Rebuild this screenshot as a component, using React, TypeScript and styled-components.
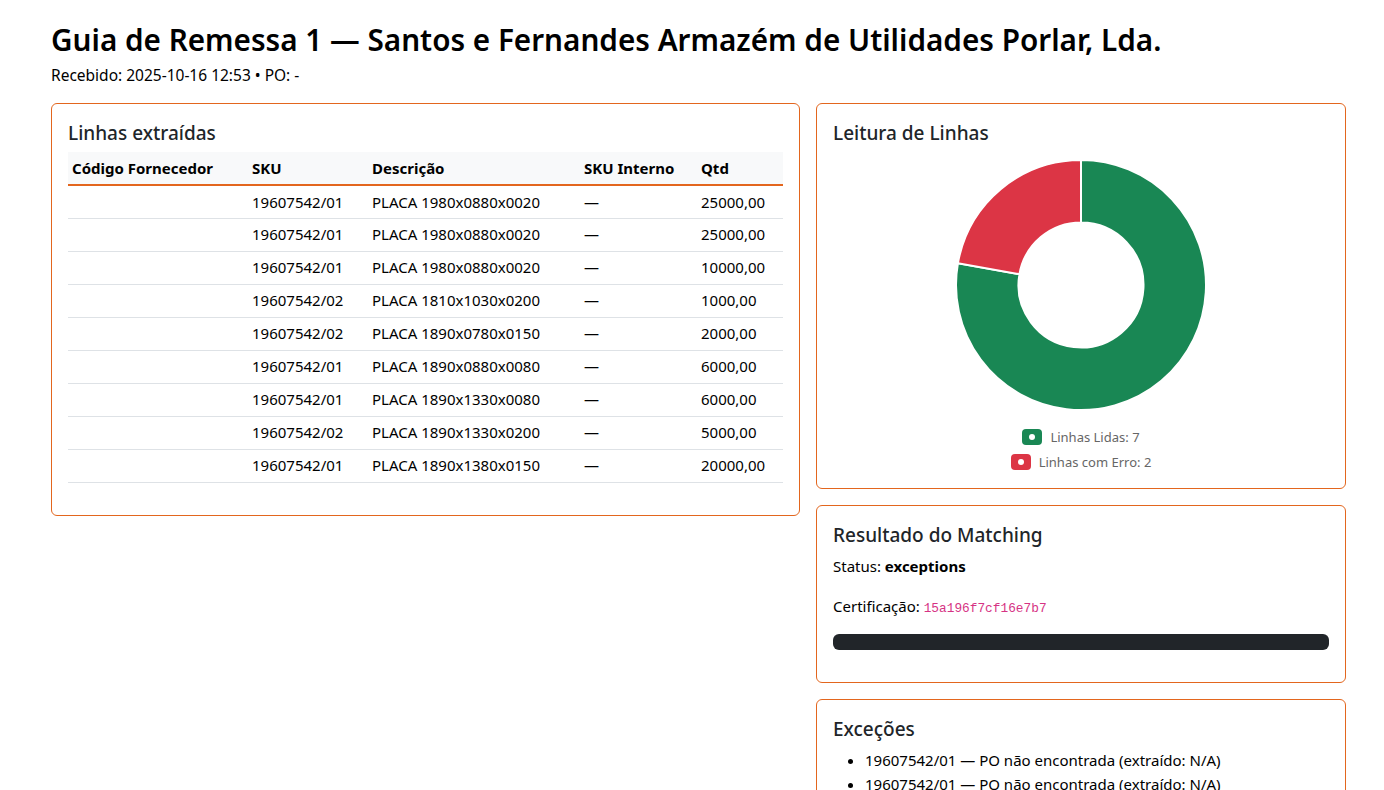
import React from 'react';
import styled, { createGlobalStyle } from 'styled-components';

const GlobalStyle = createGlobalStyle`
  * { box-sizing: border-box; }
  body {
    margin: 0;
    background: #fff;
    color: #212529;
    font-family: "Noto Sans", "Open Sans", sans-serif;
    font-size: 15px;
    line-height: 1.5;
  }
`;

interface Row {
  supplier: string;
  sku: string;
  desc: string;
  internal: string;
  qty: string;
}

const rows: Row[] = [
  { supplier: '', sku: '19607542/01', desc: 'PLACA 1980x0880x0020', internal: '—', qty: '25000,00' },
  { supplier: '', sku: '19607542/01', desc: 'PLACA 1980x0880x0020', internal: '—', qty: '25000,00' },
  { supplier: '', sku: '19607542/01', desc: 'PLACA 1980x0880x0020', internal: '—', qty: '10000,00' },
  { supplier: '', sku: '19607542/02', desc: 'PLACA 1810x1030x0200', internal: '—', qty: '1000,00' },
  { supplier: '', sku: '19607542/02', desc: 'PLACA 1890x0780x0150', internal: '—', qty: '2000,00' },
  { supplier: '', sku: '19607542/01', desc: 'PLACA 1890x0880x0080', internal: '—', qty: '6000,00' },
  { supplier: '', sku: '19607542/01', desc: 'PLACA 1890x1330x0080', internal: '—', qty: '6000,00' },
  { supplier: '', sku: '19607542/02', desc: 'PLACA 1890x1330x0200', internal: '—', qty: '5000,00' },
  { supplier: '', sku: '19607542/01', desc: 'PLACA 1890x1380x0150', internal: '—', qty: '20000,00' },
];

const exceptions = [
  '19607542/01 — PO não encontrada (extraído: N/A)',
  '19607542/01 — PO não encontrada (extraído: N/A)',
  '19607542/01 — PO não encontrada (extraído: N/A)',
];

const chartData = [
  { label: 'Linhas Lidas', value: 7, color: '#198754' },
  { label: 'Linhas com Erro', value: 2, color: '#dc3545' },
];

function point(cx: number, cy: number, r: number, a: number) {
  const rad = (a * Math.PI) / 180;
  return [cx + r * Math.sin(rad), cy - r * Math.cos(rad)];
}

function arcPath(cx: number, cy: number, R: number, r: number, a0: number, a1: number) {
  const large = a1 - a0 > 180 ? 1 : 0;
  const [x0, y0] = point(cx, cy, R, a0);
  const [x1, y1] = point(cx, cy, R, a1);
  const [x2, y2] = point(cx, cy, r, a1);
  const [x3, y3] = point(cx, cy, r, a0);
  return `M${x0} ${y0} A${R} ${R} 0 ${large} 1 ${x1} ${y1} L${x2} ${y2} A${r} ${r} 0 ${large} 0 ${x3} ${y3} Z`;
}

function Donut() {
  const total = chartData.reduce((s, d) => s + d.value, 0);
  let start = 0;
  return (
    <svg width="252" height="252" viewBox="-1 -1 252 252">
      {chartData.map((d) => {
        const sweep = (d.value / total) * 360;
        const p = arcPath(125, 125, 125, 62.5, start, start + sweep);
        start += sweep;
        return <path key={d.label} d={p} fill={d.color} stroke="#fff" strokeWidth={2} />;
      })}
    </svg>
  );
}

export default function App() {
  return (
    <>
      <GlobalStyle />
      <Page>
        <Title>Guia de Remessa 1 — Santos e Fernandes Armazém de Utilidades Porlar, Lda.</Title>
        <Meta>Recebido: 2025-10-16 12:53 • PO: -</Meta>
        <Columns>
          <Card>
            <CardTitle>Linhas extraídas</CardTitle>
            <Table>
              <colgroup>
                <col style={{ width: 180 }} />
                <col style={{ width: 120 }} />
                <col style={{ width: 212 }} />
                <col style={{ width: 117 }} />
                <col />
              </colgroup>
              <thead>
                <tr>
                  <Th>Código Fornecedor</Th>
                  <Th>SKU</Th>
                  <Th>Descrição</Th>
                  <Th>SKU Interno</Th>
                  <Th>Qtd</Th>
                </tr>
              </thead>
              <tbody>
                {rows.map((r, i) => (
                  <tr key={i}>
                    <Td>{r.supplier}</Td>
                    <Td>{r.sku}</Td>
                    <Td>{r.desc}</Td>
                    <Td>{r.internal}</Td>
                    <Td>{r.qty}</Td>
                  </tr>
                ))}
              </tbody>
            </Table>
          </Card>
          <Side>
            <Card>
              <CardTitle>Leitura de Linhas</CardTitle>
              <ChartWrap>
                <Donut />
                <Legend>
                  {chartData.map((d) => (
                    <LegendItem key={d.label}>
                      <Swatch $color={d.color} />
                      {d.label}: {d.value}
                    </LegendItem>
                  ))}
                </Legend>
              </ChartWrap>
            </Card>
            <Card>
              <CardTitle>Resultado do Matching</CardTitle>
              <Para>
                Status: <strong>exceptions</strong>
              </Para>
              <Para>
                Certificação: <Code>15a196f7cf16e7b7</Code>
              </Para>
              <Progress />
            </Card>
            <Card>
              <CardTitle>Exceções</CardTitle>
              <List>
                {exceptions.map((e, i) => (
                  <li key={i}>{e}</li>
                ))}
              </List>
            </Card>
          </Side>
        </Columns>
      </Page>
    </>
  );
}

const Page = styled.main`
  padding: 22px 38px 24px 51px;
`;

const Title = styled.h1`
  margin: 0;
  font-size: 29.7px;
  font-weight: 600;
  line-height: 36px;
  color: #000;
`;

const Meta = styled.p`
  margin: 6px 0 16px;
  font-size: 15.5px;
  line-height: 23px;
  color: #000;
`;

const Columns = styled.div`
  display: grid;
  grid-template-columns: 749fr 530fr;
  gap: 16px;
  align-items: start;
`;

const Side = styled.div`
  display: flex;
  flex-direction: column;
  gap: 16px;
`;

const Card = styled.section`
  border: 1px solid #e3661e;
  border-radius: 6px;
  padding: 18px 16px 16px;
  background: #fff;
`;

const CardTitle = styled.h5`
  margin: 0 0 7px;
  font-size: 19px;
  font-weight: 500;
  line-height: 23px;
  color: #212529;
`;

const Table = styled.table`
  width: 100%;
  border-collapse: collapse;
  table-layout: fixed;
  margin-bottom: 16px;
  color: #000;
`;

const Th = styled.th`
  text-align: left;
  font-weight: 700;
  padding: 4.5px 4px;
  line-height: 23px;
  background: #f8f9fa;
  border-bottom: 2px solid #e3661e;
  white-space: nowrap;
`;

const Td = styled.td`
  padding: 4px 4px;
  height: 33px;
  border-bottom: 1px solid #dee2e6;
  white-space: nowrap;
`;

const ChartWrap = styled.div`
  display: flex;
  flex-direction: column;
  align-items: center;
  padding-top: 7px;
`;

const Legend = styled.div`
  display: flex;
  flex-direction: column;
  align-items: center;
  gap: 5px;
  margin-top: 16px;
`;

const LegendItem = styled.div`
  display: flex;
  align-items: center;
  gap: 8px;
  font-size: 13px;
  line-height: 20px;
  color: #666;
`;

const Swatch = styled.span<{ $color: string }>`
  position: relative;
  width: 20px;
  height: 16px;
  border-radius: 4px;
  background: ${(p) => p.$color};
  &::after {
    content: '';
    position: absolute;
    left: 7px;
    top: 5px;
    width: 6px;
    height: 6px;
    border-radius: 50%;
    background: #fff;
  }
`;

const Para = styled.p`
  margin: 0 0 16px;
  font-size: 15px;
  line-height: 24px;
  color: #000;
  strong { font-weight: 700; }
`;

const Code = styled.code`
  font-family: "Liberation Mono", "DejaVu Sans Mono", monospace;
  font-size: 12.8px;
  line-height: 1;
  color: #d63384;
`;

const Progress = styled.div`
  height: 16px;
  border-radius: 6px;
  background: #212529;
  margin-bottom: 16px;
`;

const List = styled.ul`
  margin: 0;
  padding-left: 32px;
  font-size: 15px;
  color: #000;
  li { line-height: 24px; }
`;
